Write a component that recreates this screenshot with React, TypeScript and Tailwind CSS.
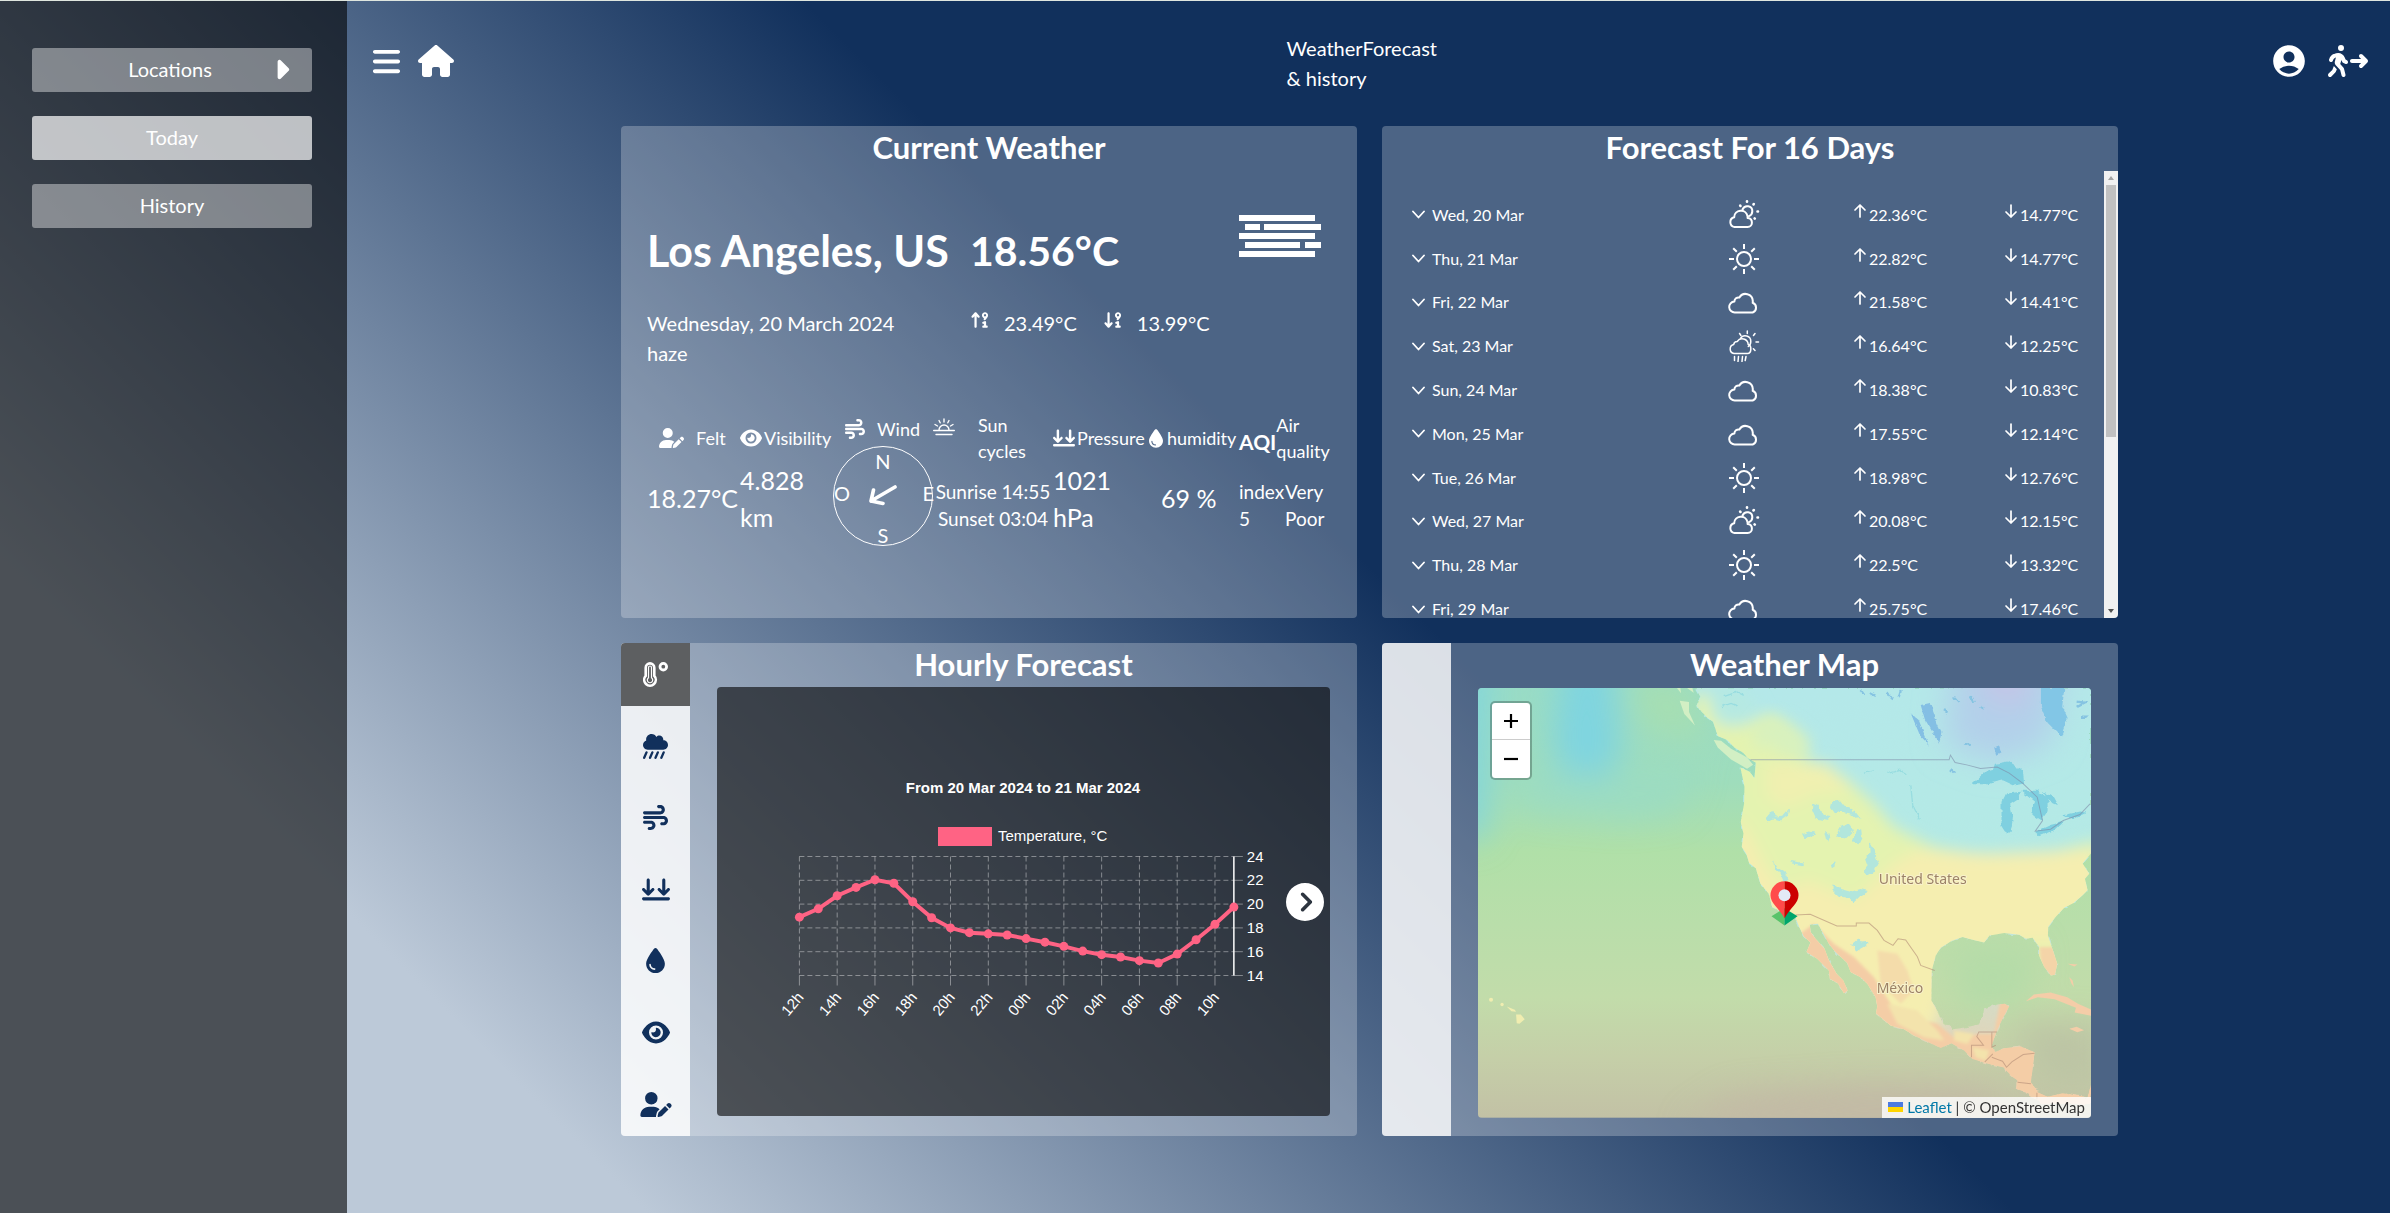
import type { ReactNode } from 'react';
import {
  FaArrowDown91,
  FaArrowsDownToLine,
  FaArrowUp91,
  FaBars,
  FaCaretRight,
  FaCircleChevronRight,
  FaCloudShowersHeavy,
  FaDroplet,
  FaEye,
  FaHouse,
  FaPersonWalkingArrowRight,
  FaUserPen,
  FaWind,
} from 'react-icons/fa6';
import { MdAccountCircle } from 'react-icons/md';

type Sky = 'partly' | 'sun' | 'cloud' | 'rain';

const days: { day: string; sky: Sky; max: string; min: string }[] = [
  { day: 'Wed, 20 Mar', sky: 'partly', max: '22.36', min: '14.77' },
  { day: 'Thu, 21 Mar', sky: 'sun', max: '22.82', min: '14.77' },
  { day: 'Fri, 22 Mar', sky: 'cloud', max: '21.58', min: '14.41' },
  { day: 'Sat, 23 Mar', sky: 'rain', max: '16.64', min: '12.25' },
  { day: 'Sun, 24 Mar', sky: 'cloud', max: '18.38', min: '10.83' },
  { day: 'Mon, 25 Mar', sky: 'cloud', max: '17.55', min: '12.14' },
  { day: 'Tue, 26 Mar', sky: 'sun', max: '18.98', min: '12.76' },
  { day: 'Wed, 27 Mar', sky: 'partly', max: '20.08', min: '12.15' },
  { day: 'Thu, 28 Mar', sky: 'sun', max: '22.5', min: '13.32' },
  { day: 'Fri, 29 Mar', sky: 'cloud', max: '25.75', min: '17.46' },
];

const hourly = [
  18.9, 19.6, 20.7, 21.4, 22.05, 21.75, 20.2, 18.85, 18, 17.6, 17.5, 17.4, 17.1, 16.8, 16.45, 16.05, 15.75, 15.55,
  15.25, 15.05, 15.8, 17, 18.3, 19.75,
];

function SkyIcon({ sky }: { sky: Sky }) {
  return (
    <svg viewBox="0 0 32 32" className="size-8" fill="none" stroke="white" strokeWidth="2" strokeLinecap="round" strokeLinejoin="round" aria-label={sky}>
      {sky === 'sun' && (
        <>
          <circle cx="16" cy="16" r="7" />
          <path strokeLinecap="butt" d="M16 1v5M16 26v5M1 16h5M26 16h5M5.2 5.2l3.6 3.6M23.2 23.2l3.6 3.6M26.8 5.2l-3.6 3.6M8.8 23.2l-3.6 3.6" />
        </>
      )}
      {sky === 'cloud' && (
        <path d="M7 26.5a5.5 5.5 0 0 1-.6-11 4.200 4.200 0 0 1 5-4 7.200 7.200 0 0 1 13.400 3.400c0 .8 0 1.200-.1 1.900a5.200 5.200 0 0 1 0 9.700z" />
      )}
      {sky === 'partly' && (
        <>
          <path d="M6.500 28a5 5 0 0 1-.3-9.800c0-7.700 11.600-9 13.200-1.400.3 1 .2 1.800.2 2.300 6 .6 5.500 8.900 0 8.900z" />
          <path d="M14.500 10.500c2.200-5.300 10-3.800 9.800 1.800 0 2.400-1.300 4-3.300 4.900" />
          <path strokeWidth="2.600" d="M12.200 6.600l.3.400M19 2.200v.6M25.800 5l-.3.4M29.500 12.500h.5M26.600 19.400l.2.200" />
        </>
      )}
      {sky === 'rain' && (
        <g strokeWidth="1.500">
          <path d="M6 23.500a4.600 4.600 0 0 1-.3-9 3.500 3.500 0 0 1 3.500-3 6 6 0 0 1 11 3c3.800 1 3.400 9-.6 9z" />
          <path d="M12.500 8.500c2.600-4.500 10.500-3 10.300 3 0 2.300-1 4-2.500 5" />
          <path d="M19.300 1v2.500M11.600 3.500l1.300 2M27 3.500l-1.500 2M30.500 12H28M27 20.500l-1.600-1.800M6.500 26.500v4M10.500 26.500l-.5 5M14.500 26.500l-.5 5M18 26.500l-.8 4" />
        </g>
      )}
    </svg>
  );
}

function Arrow({ down = false }: { down?: boolean }) {
  return (
    <svg viewBox="0 0 14 16" className="mb-2 h-4 w-3.5" fill="none" stroke="white" strokeWidth="1.700" strokeLinecap="round" strokeLinejoin="round">
      <path d={down ? 'M7 2v12M2 9l5 5 5-5' : 'M7 14V2M2 7l5-5 5 5'} />
    </svg>
  );
}

function HazeIcon() {
  return (
    <svg viewBox="0 0 82 42" className="h-[42px] w-[82px]" fill="white" aria-label="haze">
      <path d="M0 0h76v6H0zM6 9h15v6H6zM25 9h57v6H25zM0 18h76v6H0zM6 27h55v6H6zM66 27h16v6H66zM0 36h76v6H0z" />
    </svg>
  );
}

function ThermometerIcon() {
  return (
    <svg viewBox="0 0 25 25" className="size-[25px]" fill="none" stroke="currentColor">
      <path strokeWidth="2.600" d="M2.700 5.700a4.300 4.300 0 0 1 8.600 0v8.200a5.800 5.800 0 1 1-8.600 0z" />
      <path strokeWidth="1.200" d="M5.500 5.500a1.500 1.500 0 0 1 3 0v10.300a2.700 2.700 0 1 1-3 0z" />
      <circle cx="20.300" cy="4.700" r="3.300" strokeWidth="2.800" />
    </svg>
  );
}

function SunCycleIcon() {
  return (
    <svg viewBox="0 0 22 18" className="h-[18px] w-[22px]" fill="none" stroke="white" strokeWidth="1.400" strokeLinecap="round">
      <path d="M.7 12.500h20.600M3 16.500h16M6 12a5 5 0 0 1 10 0M11 1v3M6 2.500l1.200 2.300M16 2.500l-1.200 2.300M2 6.500l2.500 1.500M20 6.500L17.500 8" />
    </svg>
  );
}

function Title({ children }: { children: ReactNode }) {
  return <h2 className="h-11 text-center text-[31px] leading-[42px] font-bold">{children}</h2>;
}

function SideButton({ children, active = false }: { children: ReactNode; active?: boolean }) {
  return (
    <button type="button" className={`relative h-11 w-full rounded-[3px] pb-0.5 text-[20px] ${active ? 'bg-white/70' : 'bg-white/40'}`}>
      {children}
    </button>
  );
}

function Label({ icon, children, className = '' }: { icon: ReactNode; children: ReactNode; className?: string }) {
  return (
    <div className={`flex items-center text-[18px] leading-[26px] ${className}`}>
      {icon}
      <span>{children}</span>
    </div>
  );
}

function CurrentWeather() {
  return (
    <section className="rounded bg-white/25">
      <Title>Current Weather</Title>
      <div className="px-[26px] pt-[45px]">
        <div className="grid grid-cols-[323px_1fr_auto] items-start">
          <h3 className="pt-1.5 text-[43px] leading-[60px] font-bold whitespace-nowrap">Los Angeles, US</h3>
          <p className="pt-1.5 text-[41px] leading-[60px] font-bold">18.56°C</p>
          <div className="pr-2.5">
            <HazeIcon />
          </div>
        </div>
        <div className="mt-[27px] grid grid-cols-[323px_1fr] text-[20px] leading-[30px]">
          <p>
            Wednesday, 20 March 2024
            <br />
            haze
          </p>
          <div className="flex h-[30px] items-center">
            <FaArrowUp91 className="mb-1.5 mr-3.5" size={20} />
            <span className="mr-[26px]">23.49°C</span>
            <FaArrowDown91 className="mb-1.5 mr-3.5" size={20} />
            <span>13.99°C</span>
          </div>
        </div>
        <div className="mt-12 grid grid-cols-[93px_93px_100px_120px_96px_90px_1fr]">
          <div>
            <Label className="h-11 gap-3 pl-3" icon={<FaUserPen size={20} className="w-[25px]" />}>
              Felt
            </Label>
            <p className="mt-5 text-[25px] leading-[37px]">18.27°C</p>
          </div>
          <div>
            <Label className="h-11 gap-0.5" icon={<FaEye size={22} />}>
              Visibility
            </Label>
            <p className="mt-0.5 text-[25px] leading-[37px]">
              4.828
              <br />
              km
            </p>
          </div>
          <div>
            <Label className="h-[30px] gap-3 pb-1 pl-3" icon={<FaWind size={20} />}>
              Wind
            </Label>
            <div className="grid size-[100px] grid-cols-3 grid-rows-3 place-items-center rounded-full border border-white text-[20px] leading-none">
              <span className="col-start-2 mb-1">N</span>
              <span className="col-start-1 row-start-2 mr-auto mb-1.5">O</span>
              <svg viewBox="0 0 28 21" className="col-start-2 row-start-2 h-[21px] w-7" fill="none" stroke="white" strokeWidth="3.600" strokeLinecap="round" strokeLinejoin="round">
                <path d="M26 2L2 16M4.500 5L2 16l12 2.500" />
              </svg>
              <span className="col-start-3 row-start-2 -mr-0.5 mb-1.5 justify-self-end">E</span>
              <span className="col-start-2 row-start-3 mt-auto">S</span>
            </div>
          </div>
          <div>
            <Label className="h-11 gap-[23px]" icon={<span className="self-start pt-0.5"><SunCycleIcon /></span>}>
              Sun cycles
            </Label>
            <p className="mt-[18px] text-center text-[19px] leading-[27px] whitespace-nowrap">
              Sunrise 14:55
              <br />
              Sunset 03:04
            </p>
          </div>
          <div>
            <Label className="h-11 gap-0.5" icon={<FaArrowsDownToLine size={20} className="w-[22px] shrink-0" />}>
              Pressure
            </Label>
            <p className="mt-0.5 text-[25px] leading-[37px]">
              1021
              <br />
              hPa
            </p>
          </div>
          <div>
            <Label className="h-11 gap-1" icon={<FaDroplet size={19} className="w-3.5 shrink-0" />}>
              humidity
            </Label>
            <p className="mt-5 pl-3 text-[25px] leading-[37px]">69 %</p>
          </div>
          <div>
            <Label className="h-11" icon={<b className="pt-2 text-[21px]">AQI</b>}>
              Air quality
            </Label>
            <div className="mt-[18px] grid grid-cols-[46px_1fr] text-[19px] leading-[27px]">
              <span>
                index
                <br />5
              </span>
              <span>
                Very
                <br />
                Poor
              </span>
            </div>
          </div>
        </div>
      </div>
    </section>
  );
}

function Forecast() {
  return (
    <section className="flex flex-col overflow-hidden rounded bg-white/25">
      <Title>Forecast For 16 Days</Title>
      <div className="mt-px flex min-h-0 flex-1 basis-0 overflow-hidden">
        <ul className="grid h-[460px] flex-1 auto-rows-fr pt-[22px] pl-[30px] text-[16px]">
          {days.map((d) => (
            <li key={d.day} className="grid grid-cols-[300px_138px_151px_1fr] items-center">
              <button type="button" className="flex items-center gap-[7px]">
                <svg viewBox="0 0 13 9" className="h-[9px] w-[13px]" fill="none" stroke="white" strokeWidth="1.800" strokeLinecap="round" strokeLinejoin="round">
                  <path d="M1 1.500l5.500 6 5.500-6" />
                </svg>
                {d.day}
              </button>
              <span className="pl-4">
                <SkyIcon sky={d.sky} />
              </span>
              <span className="flex items-center gap-0.5 pl-[3px]">
                <Arrow />
                {d.max}°C
              </span>
              <span className="flex items-center gap-0.5 pl-[3px]">
                <Arrow down />
                {d.min}°C
              </span>
            </li>
          ))}
        </ul>
        <div className="flex w-3.5 flex-col items-center bg-[#f1f1f1]">
          <span className="my-[5px] border-x-3 border-b-4 border-x-transparent border-b-[#a3a3a3]" />
          <span className="h-[252px] w-2.5 bg-[#c1c1c1]" />
          <span className="mt-auto mb-[5px] border-x-3 border-t-4 border-x-transparent border-t-[#505050]" />
        </div>
      </div>
    </section>
  );
}

function HourlyChart() {
  const x = (i: number) => 82.400 + i * 18.890;
  const y = (t: number) => 169.500 + (24 - t) * 11.900;
  const line = hourly.map((t, i) => `${x(i)},${y(t)}`).join(' ');
  return (
    <svg viewBox="0 0 613 429" className="w-full font-['Liberation_Sans',sans-serif]" fill="white" fontSize="15">
      <text x="306" y="106" textAnchor="middle" fontWeight="bold">
        From 20 Mar 2024 to 21 Mar 2024
      </text>
      <rect x="221" y="140" width="54" height="19" fill="#ff6384" />
      <text x="281" y="154">Temperature, °C</text>
      {[24, 22, 20, 18, 16, 14].map((t) => (
        <g key={t}>
          <path d={`M${x(0)} ${y(t)}H${x(23)}`} stroke="white" strokeOpacity=".4" strokeDasharray="5 3" />
          <path d={`M${x(23)} ${y(t)}h9`} stroke="white" strokeOpacity=".4" />
          <text x={x(23) + 13} y={y(t) + 5}>{t}</text>
        </g>
      ))}
      {hourly.map((_, i) =>
        i % 2 ? null : (
          <g key={i}>
            <path d={`M${x(i)} ${y(24)}V${y(14)}`} stroke="white" strokeOpacity=".4" strokeDasharray="5 3" />
            <path d={`M${x(i)} ${y(14)}v10`} stroke="white" strokeOpacity=".4" />
            <text textAnchor="end" transform={`translate(${x(i) + 5} ${y(14) + 22}) rotate(-50)`}>
              {String((12 + i) % 24).padStart(2, '0')}h
            </text>
          </g>
        ),
      )}
      <path d={`M${x(23)} ${y(24)}V${y(14)}`} stroke="white" strokeWidth="1.500" />
      <polyline points={line} fill="none" stroke="#ff6384" strokeWidth="4" />
      {hourly.map((t, i) => (
        <circle key={i} cx={x(i)} cy={y(t)} r="4.500" fill="#ff6384" />
      ))}
    </svg>
  );
}

const tabs = [
  { name: 'Temperature', icon: <ThermometerIcon /> },
  { name: 'Rain', icon: <FaCloudShowersHeavy size={25} /> },
  { name: 'Wind', icon: <FaWind size={25} /> },
  { name: 'Pressure', icon: <FaArrowsDownToLine size={25} className="w-7" /> },
  { name: 'Humidity', icon: <FaDroplet size={25} /> },
  { name: 'Visibility', icon: <FaEye size={25} className="w-7" /> },
  { name: 'Felt', icon: <FaUserPen size={25} className="w-8" /> },
];

function Hourly() {
  return (
    <section className="flex overflow-hidden rounded bg-white/25">
      <nav className="flex w-[69px] flex-col justify-between bg-white/80 text-[#11305c]">
        {tabs.map((t, i) => (
          <button
            key={t.name}
            type="button"
            aria-label={t.name}
            className={`grid h-[63px] place-items-center ${i === 0 ? 'bg-[#5d5f61] text-white' : ''}`}
          >
            {t.icon}
          </button>
        ))}
      </nav>
      <div className="flex-1 px-[27px] pb-[18px]">
        <Title>Hourly Forecast</Title>
        <div className="relative overflow-hidden rounded bg-black/60">
          <HourlyChart />
          <button type="button" aria-label="Next hours" className="absolute top-1/2 right-1.5 -translate-y-1/2">
            <FaCircleChevronRight size={38} />
          </button>
        </div>
      </div>
    </section>
  );
}

const LAND =
  'M-15 174L0 200-12 228 20 262 38 275 52 318 80 330 102 352 128 368 142 384 166 398 162 444 148 425 120 412 132 470 131 520 121 575 129 610 124 650 138 672 146 698 166 714 180 760 205 790 215 830 250 848 285 862 296 890 310 918 330 936 318 965 350 985 385 1020 388 1045 412 1058 430 1088 441 1080 428 1050 408 1030 385 990 372 955 345 925 330 905 328 882 352 880 370 912 385 940 402 962 440 998 450 1025 480 1040 500 1060 525 1100 530 1128 526 1148 570 1185 610 1196 640 1215 720 1252 752 1238 790 1260 815 1285 870 1302 908 1310 930 1335 950 1350 948 1375 975 1384 1000 1405 1020 1420 1170 1420 1170 1362 1160 1400 1085 1388 1040 1398 1012 1386 990 1355 998 1290 1001 1265 960 1248 910 1253 884 1264 872 1248 888 1200 905 1165 925 1128 912 1120 890 1122 850 1133 846 1160 834 1182 790 1192 757 1196 725 1175 712 1145 692 1110 693 1020 705 975 720 952 752 932 785 920 815 928 850 936 866 915 910 908 955 913 975 925 995 922 1015 950 1014 975 1030 1010 1050 1035 1062 1033 1069 1000 1056 960 1041 915 1042 890 1062 862 1090 832 1118 818 1145 795 1160 780 1152 745 1165 730 1145 700 1170 670 1170 174z';

const COOL_PATCHES =
  'M195 565l20-24 8 18 25-2 18-22-4 22-20 14-22-6-20 12zM305 612l22-8 20 4-14 12-20 6zM335 520l20 8 8 24 30 6-10 14-38-8-10-22zM395 515l22-4 14 18 22 8-4 14-26-6-20 4-12-16zM412 604l12-20 22-2 14 18-14 16-14 12-24-10zM466 596l16 2 2 22-12 26-14-16zM505 640l16 12 6 30 8 16-14 26-20 10-12-12 12-14-8-22 14-20zM218 690l10 20 24 16 12 22-14 6-10-22-18-16zM396 762l24 14 30 8 30-8 22 6-24 16-18 18-20-12-26-8-18-18zM272 692l20 4 22 0-8 12-24-4zM390 700l14-4 2 10-12 8zM455 940l18-16 10 12 22-2-14 14-24 14zM370 600l14 10 4 24-12-8zM450 540l14 4 16 20-14 2-16-12z';

function WeatherMap() {
  return (
    <svg viewBox="0 0 612 429" className="w-full" role="img" aria-label="Temperature map of North America">
      <defs>
        <linearGradient id="sea" x1="0" y1="0" x2="0" y2="1">
          <stop offset="0" stopColor="#99dcc6" />
          <stop offset=".22" stopColor="#9fddbc" />
          <stop offset=".38" stopColor="#b0e0a8" />
          <stop offset=".55" stopColor="#b9deaa" />
          <stop offset=".72" stopColor="#c2dcaa" />
          <stop offset=".86" stopColor="#c5cfa8" />
          <stop offset="1" stopColor="#c2c1a5" />
        </linearGradient>
        <linearGradient id="land" gradientUnits="userSpaceOnUse" x1="0" y1="174" x2="0" y2="1420">
          <stop offset="0" stopColor="#b4e8e9" />
          <stop offset=".5" stopColor="#b4eae4" />
          <stop offset="1" stopColor="#f4cda8" />
        </linearGradient>
        <filter id="haze" x="-40%" y="-40%" width="180%" height="180%">
          <feGaussianBlur stdDeviation="48" />
        </filter>
        <filter id="soft" x="-20%" y="-20%" width="140%" height="140%">
          <feGaussianBlur stdDeviation="22" />
        </filter>
        <filter id="slight">
          <feGaussianBlur stdDeviation="5" />
        </filter>
        <filter id="rough" x="-5%" y="-5%" width="110%" height="110%">
          <feTurbulence type="fractalNoise" baseFrequency=".05" numOctaves="3" seed="4" />
          <feDisplacementMap in="SourceGraphic" scale="14" xChannelSelector="R" yChannelSelector="G" />
        </filter>
        <clipPath id="coast">
          <path d={LAND} />
        </clipPath>
      </defs>
      <rect width="612" height="429" fill="url(#sea)" />
      <g transform="translate(222 -58) scale(.33333)">
        <g filter="url(#haze)">
          <path d="M-400 60h130l30 300-60 160-120-60-20-160z" fill="#7fd4e0" />
          <path d="M-760 100h130l-10 500-40 40-80-60z" fill="#84d6da" />
          <path d="M-560 420l350 20 200-40-60 140-160 20-300-30z" fill="#9bdcc2" />
          <path d="M-220 120l200 40 40 180-200-40z" fill="#a9dfae" opacity=".8" />
          <path d="M100 1400l400-30 350 10 100 120H-50z" fill="#c2b9a5" />
          <path d="M760 950l240 0-20 160-200 40z" fill="#b4dba8" />
          <path d="M940 1180l260 0v200l-180-20z" fill="#bcc4a4" />
        </g>
        <path d="M-62 212l28 4 0 30 18 40-32-34zM-70 174l12 16-2-16zM-40 174l20 14-4-14zM40 330l22 2 30 24 48 26 18 22-18 12-48-28-40-36z" fill="#d2efc4" />
        <g fill="#f0edb0">
          <circle cx="-627" cy="1108" r="6" />
          <circle cx="-594" cy="1122" r="5" />
          <path d="M-580 1128l24 10 4 6-14-2zM-552 1152l14 0 12 14-16 14-8-2z" />
        </g>
        <g filter="url(#rough)">
          <path d={LAND} fill="url(#land)" />
        </g>
        <g clipPath="url(#coast)">
          <g filter="url(#haze)">
            <path d="M760 80h330l-40 260-160 60-160-60z" fill="#b2d0ea" />
            <path d="M830 60h160l-20 160-100-10z" fill="#c8c2e6" />
          </g>
          <g filter="url(#soft)">
            <path d="M-20 190l60 10 40 60 60 20 80-20 60 60 40 70 110 50 90 80 60 70 120 60 250 40 250-60v420l-280-20-200 60-120 280-90 120-400-300-140-400z" fill="#e4f3b0" />
            <path d="M110 560l40 60 50 100 60 60 60-30 140 60 120-110 70-40 220 10 240-10 80 0v280l-300 0-130 60-60 200-160 30-340-260-130-160z" fill="#f5eeb0" />
            <path d="M200 400l180 0 80 80-120 10-80 40-60-30z" fill="#f0f0b0" />
            <path d="M20 170l90 0 70 60-60 60-70-10-20-50z" fill="#b6e9e2" />
          </g>
          <g filter="url(#slight)">
            <path d="M340 880l60 60 60 40 60 60 50 80 60 40 80 20 60 50 60-20 50 0 20-110 100 0 0 100 130 20 60 170-100 30-200-60-160-60-180-20-120-100-60-100-140-120z" fill="#f4cda6" />
            <path d="M560 1120l90 20 60 60 20 30-60-10-80-40zM760 1200l60 10-20 30-40-10zM815 1250l50 10-10 30-30-10z" fill="#f3e3ac" />
            <path d="M1015 950l60 0v100h-50z" fill="#f4d4a8" />
            <path d="M530 960l60 10 30 50 20 60-40 40-60-60z" fill="#f4dcaa" />
          </g>
          <path d="M330 330l-60-50-70-30-50 60 30 60 30-40 20 50 50-10 30 30z" fill="#d8f1be" filter="url(#soft)" />
          <g filter="url(#rough)">
            <path d={COOL_PATCHES} fill="#b2e6dc" />
            <path d="M70 200l40-14 20 10M62 230l30-10 20 8M490 430l30-8M560 430l40-10 20 14M630 465l6 60 20 40" fill="none" stroke="#98dde0" strokeWidth="4" />
          </g>
        </g>
        <path d="M975 1112l24-20 50-6 50 14 32 20 42 18v18l-52-10 4-14-64-26-50-6zM1105 1195l22-6 22 10-20 6zM1105 1040l10 10 4 20-8-12zM1100 1000l30 2-10 6z" fill="#f4cda8" />
        <g filter="url(#rough)">
          <g fill="#7fd0e0">
            <path d="M812 462l40-36 24-6 6-18 40-8 24 16 20 10 4 40-30 6-34-16-44 12zM902 515l12-24 46-6-10 24-22 14 8 40-6 38-14 12-14-22zM960 482l46 0 34 20 0 44-18 26-22-14-12-12 14-30zM1024 482l36 20 14 26-30-14zM1000 606l48-22 42-10-26 24-50 20zM1084 556l54-12 18 4-44 20z" />
          </g>
          <path d="M1020 174h70l-6 54 16 36-20 54-40-40-20-48z" fill="#82c6e6" />
          <path d="M660 225l28-6 22 60 12 26-6 36-14-24-30-50zM630 250l24 20 20 50 10 24-26-28zM880 352l14-6 6 20-14 8z" fill="#84bfe4" />
          <path d="M480 180l10 14M510 190l16 8M560 186l14 20M600 180l-6 22M760 200l16 18M810 196l10 20M840 230l10 6M730 240l10 8M790 340l20 6M1130 230l30-16M1140 260l20 0M1130 215l24 4M750 420l12 10" fill="none" stroke="#86c4e2" strokeWidth="7" />
        </g>
        <g fill="none" stroke="#7d8ba6" strokeOpacity=".6" strokeWidth="3">
          <path d="M150 389H745l4-14 14 22 38 8 38 10 50-4 36 18 40 30 44 42 16 70-22 32 46-6 38-26 50-18 30-32" />
        </g>
        <g fill="none" stroke="#b08a74" strokeOpacity=".6" strokeWidth="3">
          <path d="M285 854l44-2 80 35h58v-9h38l25 22 20 30 27 15 15-20 23 4 35 50 10 26 42 15M812 1280v-36h36l-20-26 6-14h54M873 1204v46l12-6M852 1294l24-24M873 1280l32 12 12 18 16-16 34-22 34-4M950 1355l40 4M1008 1386v20" />
        </g>
      </g>
      <g fill="#9c8266" stroke="#f8f2cc" strokeWidth="2" paintOrder="stroke" fontSize="14" className="font-['Noto_Sans',sans-serif]">
        <text x="400" y="196">United States</text>
        <text x="398" y="305">México</text>
      </g>
      <g transform="translate(292 193)">
        <path d="M1 35l13-8v17z" fill="#59c36a" />
        <path d="M27 35l-13-8v17z" fill="#00a66c" />
        <path d="M14 0a14 14 0 0 0-14 14c0 8 8 12 14 23z" fill="#ff4b4b" />
        <path d="M14 0a14 14 0 0 1 14 14c0 8-8 12-14 23z" fill="#cc0000" />
        <circle cx="14" cy="14" r="6" fill="#e3eaf6" />
      </g>
    </svg>
  );
}

function MapPanel() {
  return (
    <section className="flex overflow-hidden rounded bg-white/25">
      <div className="w-[69px] bg-white/80" />
      <div className="flex-1 px-[27px] pb-[18px]">
        <Title>Weather Map</Title>
        <div className="relative mt-px overflow-hidden rounded text-black">
          <WeatherMap />
          <div className="absolute top-[13px] left-3 flex w-[42px] flex-col rounded-[5px] border-2 border-black/25 bg-white bg-clip-padding text-center">
            <button type="button" aria-label="Zoom in" className="grid h-[37px] place-items-center border-b border-[#ccc]">
              <svg viewBox="0 0 14 14" className="size-3.5" stroke="black" strokeWidth="2.200">
                <path d="M0 7h14M7 0v14" />
              </svg>
            </button>
            <button type="button" aria-label="Zoom out" className="grid h-[38px] place-items-center">
              <svg viewBox="0 0 14 14" className="size-3.5" stroke="black" strokeWidth="2.200">
                <path d="M0 7h14" />
              </svg>
            </button>
          </div>
          <div className="absolute right-0 bottom-0 flex h-[21px] items-center bg-white/80 px-1.5 text-[15px] whitespace-pre text-[#333]">
            <svg viewBox="0 0 15 10" className="mr-1 h-2.5 w-[15px]">
              <path d="M0 0h15v5H0z" fill="#4c7be1" />
              <path d="M0 5h15v5H0z" fill="#ffd500" />
            </svg>
            <a href="#leaflet" className="text-[#0078a8]">
              Leaflet
            </a>
            {' | © OpenStreetMap'}
          </div>
        </div>
      </div>
    </section>
  );
}

export default function App() {
  return (
    <div className="flex min-h-screen border-t border-[#dfe6df] bg-[linear-gradient(45deg,#bcc9d8_18%,#11305c_56%)] font-['Lato',sans-serif] text-white">
      <aside className="w-[347px] shrink-0 bg-black/60 pt-[47px] pr-[35px] pl-8">
        <nav className="flex flex-col gap-6">
          <SideButton>
            <span className="pr-1">Locations</span>
            <FaCaretRight size={31} className="absolute top-1.5 right-[15px]" />
          </SideButton>
          <SideButton active>Today</SideButton>
          <SideButton>History</SideButton>
        </nav>
      </aside>
      <div className="min-w-0 flex-1 pl-0.5">
        <header className="flex items-center px-[22px] pt-7">
          <div className="flex flex-1 items-center gap-4">
            <button type="button" aria-label="Menu">
              <FaBars size={31} />
            </button>
            <a href="#home" aria-label="Home">
              <FaHouse size={32} className="w-9" />
            </a>
          </div>
          <p className="w-[166px] pt-1 text-[20px] leading-[30px]">WeatherForecast &amp; history</p>
          <div className="flex flex-1 items-center justify-end gap-5">
            <button type="button" aria-label="Account">
              <MdAccountCircle size={38} />
            </button>
            <button type="button" aria-label="Log out">
              <FaPersonWalkingArrowRight size={32} className="w-10" />
            </button>
          </div>
        </header>
        <main className="mx-auto mt-[33px] grid w-full max-w-[1497px] grid-cols-2 gap-[25px]">
          <div className="contents [&>section]:min-h-[492px]">
            <CurrentWeather />
            <Forecast />
          </div>
          <Hourly />
          <MapPanel />
        </main>
      </div>
    </div>
  );
}
